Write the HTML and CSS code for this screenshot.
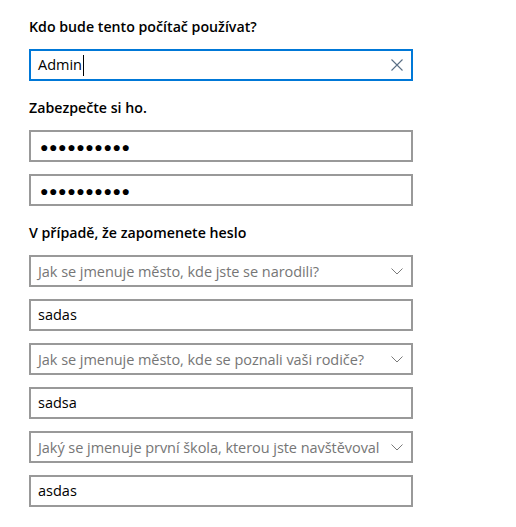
FILE: index.html
```html
<!DOCTYPE html>
<html lang="cs">
<head>
<meta charset="utf-8">
<title>Účet</title>
<link rel="stylesheet" href="styles.css">
</head>
<body>
<main class="form">
  <section class="group">
    <h2 class="label">Kdo bude tento počítač používat?</h2>
    <div class="field focused">
      <span class="value">Admin</span><span class="caret"></span>
      <svg class="clear" width="12" height="12" viewBox="0 0 12 12"><path d="M0.5 0.5 L11.5 11.5 M11.5 0.5 L0.5 11.5" stroke="#5a6f86" stroke-width="1.1" fill="none"/></svg>
    </div>
  </section>
  <section class="group">
    <h2 class="label">Zabezpečte si ho.</h2>
    <div class="field"><span class="dots">●●●●●●●●●●</span></div>
    <div class="field"><span class="dots">●●●●●●●●●●</span></div>
  </section>
  <section class="group">
    <h2 class="label">V případě, že zapomenete heslo</h2>
    <div class="field select"><span class="placeholder">Jak se jmenuje město, kde jste se narodili?</span><svg class="chev" width="12" height="7" viewBox="0 0 12 7"><path d="M0.5 0.5 L6 6 L11.5 0.5" stroke="#7a7a7a" stroke-width="1" fill="none"/></svg></div>
    <div class="field"><span class="value">sadas</span></div>
    <div class="field select"><span class="placeholder">Jak se jmenuje město, kde se poznali vaši rodiče?</span><svg class="chev" width="12" height="7" viewBox="0 0 12 7"><path d="M0.5 0.5 L6 6 L11.5 0.5" stroke="#7a7a7a" stroke-width="1" fill="none"/></svg></div>
    <div class="field"><span class="value">sadsa</span></div>
    <div class="field select"><span class="placeholder">Jaký se jmenuje první škola, kterou jste navštěvoval</span><svg class="chev" width="12" height="7" viewBox="0 0 12 7"><path d="M0.5 0.5 L6 6 L11.5 0.5" stroke="#7a7a7a" stroke-width="1" fill="none"/></svg></div>
    <div class="field"><span class="value">asdas</span></div>
  </section>
</main>
</body>
</html>
```
FILE: styles.css
```css
html, body {
  margin: 0;
  padding: 0;
  background: #ffffff;
}
body {
  font-family: "Open Sans", "Noto Sans", "Liberation Sans", sans-serif;
  font-size: 14.5px;
  color: #000000;
}
.form {
  width: 384px;
  padding: 17px 0 0 29px;
  display: flex;
  flex-direction: column;
  gap: 17px;
}
.group {
  display: flex;
  flex-direction: column;
  gap: 12px;
}
.label {
  margin: 0;
  font-size: 14.2px;
  font-weight: 600;
  line-height: 20px;
  height: 20px;
}
.field {
  box-sizing: border-box;
  height: 32px;
  border: 2px solid #999999;
  padding: 0 9px 0 7px;
  display: flex;
  align-items: center;
  overflow: hidden;
  white-space: nowrap;
}
.field.focused {
  border-color: #0078d7;
}
.value {
  line-height: 20px;
}
.caret {
  display: inline-block;
  width: 1px;
  height: 21px;
  background: #000000;
  margin-left: 1px;
}
.clear {
  margin-left: auto;
  margin-right: -1px;
}
.dots {
  font-size: 14px;
  letter-spacing: 0.6px;
  padding-left: 2px;
}
.select {
  justify-content: space-between;
}
.placeholder {
  color: #767676;
  margin-right: 4px;
  letter-spacing: -0.05px;
}
.chev {
  flex: none;
  margin-right: -1px;
}
```
